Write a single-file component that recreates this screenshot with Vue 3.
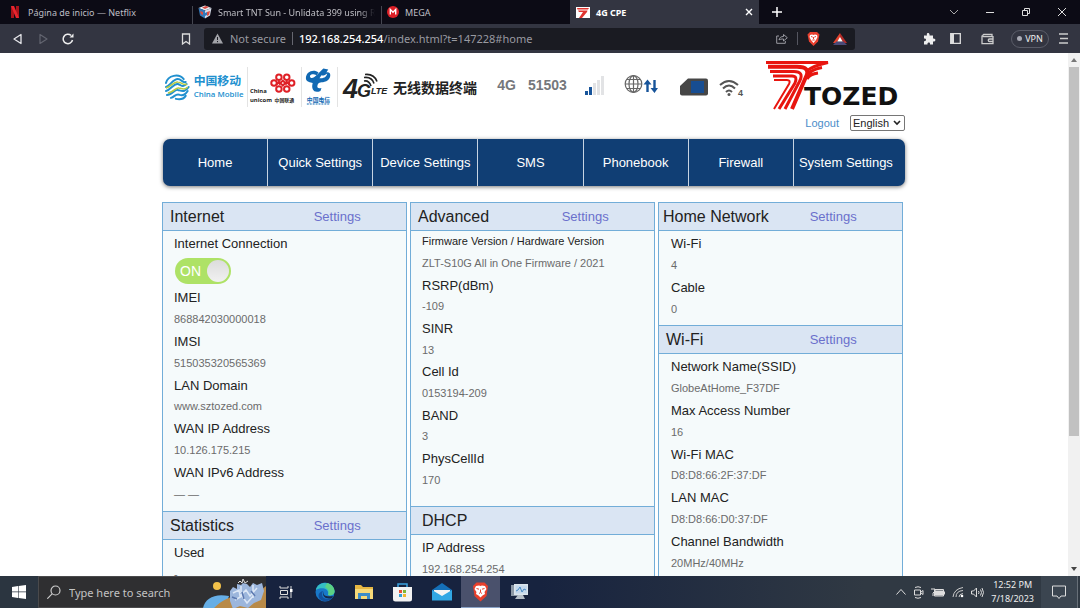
<script setup>
import { ref } from 'vue'

const address = ref('192.168.254.254/index.html?t=147228#home')
const language = ref('English')
const connected = ref(true)
const search = ref('')

const menu = ['Home', 'Quick Settings', 'Device Settings', 'SMS', 'Phonebook', 'Firewall', 'System Settings']

const columns = [
  [
    {
      title: 'Internet', settings: true, toggle: true, kind: 'internet',
      rows: [
        ['IMEI', '868842030000018'],
        ['IMSI', '515035320565369'],
        ['LAN Domain', 'www.sztozed.com'],
        ['WAN IP Address', '10.126.175.215'],
        ['WAN IPv6 Address', '— —']
      ]
    },
    { title: 'Statistics', settings: true, kind: 'statistics', rows: [['Used', '-']] }
  ],
  [
    {
      title: 'Advanced', settings: true, kind: 'advanced',
      rows: [
        ['Firmware Version / Hardware Version', 'ZLT-S10G All in One Firmware / 2021'],
        ['RSRP(dBm)', '-109'],
        ['SINR', '13'],
        ['Cell Id', '0153194-209'],
        ['BAND', '3'],
        ['PhysCellId', '170']
      ]
    },
    { title: 'DHCP', kind: 'dhcp', rows: [['IP Address', '192.168.254.254']] }
  ],
  [
    { title: 'Home Network', settings: true, kind: 'network', rows: [['Wi-Fi', '4'], ['Cable', '0']] },
    {
      title: 'Wi-Fi', settings: true, kind: 'wifi',
      rows: [
        ['Network Name(SSID)', 'GlobeAtHome_F37DF'],
        ['Max Access Number', '16'],
        ['Wi-Fi MAC', 'D8:D8:66:2F:37:DF'],
        ['LAN MAC', 'D8:D8:66:D0:37:DF'],
        ['Channel Bandwidth', '20MHz/40MHz']
      ]
    }
  ]
]
</script>

<template>
  <div class="screen">
    <header class="tabs">
      <button class="tab">
        <svg width="14" height="14" viewBox="0 0 14 14"><path d="M3 1h3v12H3z" fill="#a9141b" /><path d="M8 1h3v12H8z" fill="#a9141b" /><path d="M3 1h3l5 12H8z" fill="#e8252e" /></svg>
        <span>Página de inicio — Netflix</span>
      </button>
      <button class="tab second">
        <svg width="14" height="14" viewBox="0 0 14 14"><path d="M0.500 3 7 .5 13.500 3 7 5.500z" fill="#e9eef4" /><path d="M.5 3 7 5.500v8L2 10.500z" fill="#3479b9" /><path d="M13.500 3 7 5.500v8l5-3z" fill="#d7dce8" /><path d="M4 2.500 8 1l3 1-4 2z" fill="#d84a42" /><path d="m2 6 3 1v3L3 9zM9 7l3-1-1 4-2 1z" fill="#e04c3f" /><path d="m7 8 2-1v3l-2 1z" fill="#3479b9" /></svg>
        <span>Smart TNT Sun - Unlidata 399 using R</span>
      </button>
      <button class="tab third">
        <svg width="12" height="12" viewBox="0 0 12 12"><circle cx="6" cy="6" r="6" fill="#dd1f26" /><path d="M3.300 8.500V3.500L6 6.200l2.700-2.700v5" fill="none" stroke="#fff" stroke-width="1.400" /></svg>
        <span>MEGA</span>
      </button>
      <div class="tab active">
        <svg width="14" height="11" viewBox="0 0 14 11"><path d="M0 0h14v11H0z" fill="#fff" /><path d="M1 1h12l-1 1.500H1.500zM2 3.500h9.500L11 5H3zM7 5h4L6 11H3z" fill="#e0342f" /></svg>
        <span>4G CPE</span>
        <button class="close" aria-label="Close tab"><svg width="8" height="8" viewBox="0 0 8 8"><path d="m1 1 6 6M7 1 1 7" stroke="#fff" stroke-width="1.400" /></svg></button>
      </div>
      <button class="plain new" aria-label="New tab"><svg width="10" height="10" viewBox="0 0 10 10"><path d="M5 0v10M0 5h10" stroke="#fff" stroke-width="1.500" /></svg></button>
      <div class="window">
        <button class="plain" aria-label="Tab list"><svg width="10" height="10" viewBox="0 0 10 10"><path d="m1 3 4 4 4-4" fill="none" stroke="#aaa" /></svg></button>
        <button class="plain" aria-label="Minimize"><svg width="10" height="10" viewBox="0 0 10 10"><path d="M1 5.500h8" stroke="#ddd" /></svg></button>
        <button class="plain" aria-label="Restore"><svg width="10" height="10" viewBox="0 0 10 10"><path d="M1.500 3.500h5v5h-5zM3.500 3V1.500h5v5H7" fill="none" stroke="#ddd" /></svg></button>
        <button class="plain" aria-label="Close"><svg width="10" height="10" viewBox="0 0 10 10"><path d="m1 1 8 8M9 1 1 9" stroke="#ddd" /></svg></button>
      </div>
    </header>

    <div class="toolbar">
      <div class="history">
        <button class="plain" aria-label="Back"><svg width="12" height="12" viewBox="0 0 12 12"><path d="M9 1.500v9L2 6z" fill="none" stroke="#e6e6ea" stroke-width="1.300" stroke-linejoin="round" /></svg></button>
        <button class="plain" aria-label="Forward"><svg width="12" height="12" viewBox="0 0 12 12"><path d="M3 1.500v9L10 6z" fill="none" stroke="#62646f" stroke-width="1.200" stroke-linejoin="round" /></svg></button>
        <button class="plain" aria-label="Reload"><svg width="12" height="12" viewBox="0 0 12 12"><path d="M10.500 7A4.700 4.700 0 1 1 9 2.400" fill="none" stroke="#eee" stroke-width="1.500" /><path d="M7.500 4.500h4v-4z" fill="#eee" /></svg></button>
      </div>
      <button class="plain" aria-label="Bookmark"><svg width="10" height="12" viewBox="0 0 10 12"><path d="M1.500 1h7v10L5 8.500 1.500 11z" fill="none" stroke="#ddd" stroke-width="1.300" /></svg></button>
      <div class="address">
        <svg width="11" height="11" viewBox="0 0 11 11"><path d="M5.500.5 11 10.500H0z" fill="#a2a3a8" /><path d="M5.500 4v3M5.500 8v1.200" stroke="#1b1c24" /></svg>
        <span class="secure">Not secure</span>
        <label class="url"><span aria-hidden="true"><b>192.168.254.254</b>/index.html?t=147228#home</span><input v-model="address" aria-label="Address"></label>
        <svg width="12" height="11" viewBox="0 0 12 11"><path d="M3 3H.7v7.300h8.600V8" fill="none" stroke="#9a9ba2" /><path d="M3 7c.5-2.500 2-3.500 4.500-3.500v-2L11.300 4.700 7.500 8V6C5.500 6 4 6 3 7z" fill="none" stroke="#9a9ba2" /></svg>
        <i class="bar"></i>
        <svg width="13" height="14" viewBox="0 0 13 14"><path d="m3 0h7l2.500 2.500-1.500 7L6.500 14 2 9.500.5 2.500z" fill="#e8402f" /><path d="m3 3 2-.5 1.500.5L8 2.500l2 .5.500 2L9 8l-2.500 3L4 8 2.500 5z" fill="#fff" /><path d="m4 4.500 1.700.6M9 4.500l-1.700.6M6.500 5v2M5.300 8h2.400" stroke="#e8402f" /></svg>
        <svg class="bat" width="14" height="12" viewBox="0 0 14 12"><path d="M7 0v5L3.500 10H0z" fill="#e2432e" /><path d="M7 0v5l3.500 5H14z" fill="#b32c28" /><path d="M0 12h14l-3.500-3.500h-7z" fill="#4b4a78" /><path d="m7 4 2.700 4.500H4.300z" fill="#fff" /></svg>
      </div>
      <div class="extras">
        <button class="plain" aria-label="Extensions"><svg width="13" height="13" viewBox="0 0 13 13"><path d="M1 3.500h3C2.900.3 7.100.3 6.500 3.500H10v3c3.200-.6 3.200 3.600 0 3v3H7c.6-2.700-3-2.700-2.500 0H1V9.200c2.700.5 2.700-3.300 0-2.700z" fill="#eee" /></svg></button>
        <button class="plain" aria-label="Sidebar"><svg width="11" height="11" viewBox="0 0 11 11"><path d="M.7.7h9.600v9.600H.7z" fill="none" stroke="#ddd" stroke-width="1.300" /><path d="M1 1h3v9H1z" fill="#ddd" /></svg></button>
        <button class="plain" aria-label="Wallet"><svg width="13" height="12" viewBox="0 0 13 12"><path d="M11 3.500V1.500H2.500a1.200 1.200 0 0 0 0 2.200H12v7H1V2.500M12 6H8.500a1.200 1.200 0 0 0 0 2.500H12" fill="none" stroke="#ccc" stroke-width="1.300" /></svg></button>
        <button class="vpn"><i></i>VPN</button>
        <button class="plain" aria-label="Menu"><svg width="9" height="11" viewBox="0 0 9 11"><path d="M0 1h9M1 5.500h8M0 10h9" stroke="#ccc" stroke-width="1.300" /></svg></button>
      </div>
    </div>

    <div class="viewport">
      <main class="page">
        <header class="masthead">
          <div class="carriers">
            <svg class="ruled" width="86" height="40" viewBox="0 0 86 40" role="img" aria-label="China Mobile">
              <g fill="none" stroke="#2190cf" stroke-width="2" stroke-linecap="round"><path d="M4 16c2-8 13-10 18-4M4 20c4-1 7-8 12-8 4 0 4 4 8 3" /><path d="M4 24c5-1 8-8 12-7 4 1 4 4 9 0" /><path d="M5 28c5 0 8-6 11-5 4 1 7 3 11-3" /><path d="M9 31c4-1 5-5 9-3 3 1 6-1 8-4M14 32c4 1 8 0 10-3" /></g>
              <path d="M4 21c5-1 8-7 12-6 4 0 5 4 9 2M6 26c5 0 8-6 11-5 4 1 6 2 9-1" fill="none" stroke="#b8cc43" stroke-width="1.500" />
              <text class="cjk" x="32" y="18" font-size="12" font-weight="700" fill="#2190cf">中国移动</text>
              <text class="latin" x="32" y="30" font-size="8" font-weight="600" fill="#2190cf">China Mobile</text>
            </svg>
            <svg class="ruled" width="54" height="40" viewBox="0 0 54 40" role="img" aria-label="China Unicom">
              <g fill="none" stroke="#df2026" stroke-width="2"><circle cx="26.500" cy="16" r="2.800" /><circle cx="44.500" cy="16" r="2.800" /><circle cx="31.500" cy="10" r="2.800" /><circle cx="39.500" cy="10" r="2.800" /><circle cx="31.500" cy="22" r="2.800" /><circle cx="39.500" cy="22" r="2.800" /><path d="m29 17.500 2.500-3 4 4 4-4 2.500 3M31.500 17.500l4-4 4 4" /></g>
              <text class="latin" x="2" y="26" font-size="6" font-weight="700" fill="#222">China</text>
              <text class="latin" x="2" y="35" font-size="6" font-weight="700" fill="#222">unicom</text>
              <text class="cjk" x="27" y="35" font-size="5" font-weight="700" fill="#222">中国联通</text>
            </svg>
            <svg class="ruled" width="36" height="40" viewBox="0 0 36 40" role="img" aria-label="China Telecom">
              <path d="M4 11C4 4 12 1 17 5l-2 3C9 5 7 9 9 10.500c3 2 9-6 13-9.500l5 1-2 3c6-1 5 7 0 9-5 2-8 0-9 4-1 3 1 4 4 3l-1 3c-6 3-10-1-8-8C9 15 4 15 4 11z" fill="#1169b3" />
              <path d="M20 8c2 1 4-1 6-2-1 4-4 5-8 5" fill="#fff" />
              <text class="cjk" x="5" y="35" font-size="6" font-weight="700" fill="#1169b3">中国电信</text>
              <path d="M5 37.500h24" stroke="#1169b3" stroke-dasharray="2 1" />
            </svg>
            <svg width="55" height="40" viewBox="0 0 55 40" role="img" aria-label="4G LTE">
              <g font-style="italic" font-weight="700" fill="#222"><text x="5" y="31" font-size="27">4</text><text x="19" y="30" font-size="18">G</text><text x="33" y="27" font-size="9">LTE</text></g>
              <path d="M26 14q5-1 7 5M26 10.500q8-1 10 6M27 7.500q9-1 12 7" fill="none" stroke="#222" stroke-width="1.600" />
            </svg>
            <strong class="terminal">无线数据终端</strong>
          </div>
          <div class="status">
            <b>4G</b>
            <b>51503</b>
            <svg class="signal" width="20" height="19" viewBox="0 0 20 19"><path d="M0 15h3v4H0zM4 11h3v8H4z" fill="#17549a" /><path d="M8 7h3v12H8zM12 4h3v15h-3zM16 0h3v19h-3z" fill="#e2e3e5" /></svg>
            <svg class="globe" width="34" height="20" viewBox="0 0 34 20"><g fill="none" stroke="#666" stroke-width="1.200"><circle cx="9.500" cy="9" r="8.300" /><ellipse cx="9.500" cy="9" rx="4.500" ry="8.300" /><path d="M9.500 1v16M1 9h17M2.500 4.500h14M2.500 13.500h14" /></g><path d="M23.500 17V7M30.500 5v10" stroke="#17549a" stroke-width="2.400" /><path d="m19.500 9.500 4-5 4 5zM26.500 13l4 5 3.500-5z" fill="#17549a" /></svg>
            <svg class="sim" width="28" height="18" viewBox="0 0 28 18"><path d="M8 .5h18a2 2 0 0 1 2 2v13a2 2 0 0 1-2 2H2a2 2 0 0 1-2-2V8z" fill="#464646" /><path d="M11 3h13v12H11z" fill="#174d91" /></svg>
            <svg class="wireless" width="26" height="20" viewBox="0 0 26 20"><g fill="none" stroke="#555" stroke-width="2"><path d="M1 7q9-8 18 0" /><path d="M4 10.500q6-6 12 0" /><path d="M7 14q3-3 6 0" /></g><circle cx="10" cy="16.500" r="1.500" fill="#555" /><text x="19" y="18" font-size="9" font-weight="700" fill="#555">4</text></svg>
          </div>
          <div class="brand">
            <svg width="140" height="54" viewBox="0 0 140 54" role="img" aria-label="Tozed">
              <g fill="none" stroke="#e8150f" stroke-width="3"><path d="M1 3.500h62q-15 3-22 9" /><path d="M3 7.800h29q14 0 9 10L27 50" stroke-width="4" /><path d="M5 12.500h24q10 0 6 9L20 50" /><path d="M8 17h19q6 0 3 7L14 50" /><path d="M9 21h13q4 0 2 4L9 50" stroke-width="2" /><path d="M57 8.500q-12 2-15 9M53 14q-8 1-11 6" /></g>
              <text class="tozed" x="39" y="46" font-size="25" font-weight="700" fill="#111">TOZED</text>
            </svg>
            <div class="account">
              <a href="#logout">Logout</a>
              <span class="language">
                <select v-model="language" aria-label="Language"><option>English</option></select>
                <svg width="8" height="6" viewBox="0 0 8 6"><path d="m1 1 3 3 3-3" fill="none" stroke="#222" stroke-width="1.600" /></svg>
              </span>
            </div>
          </div>
        </header>

        <nav class="menu">
          <a v-for="item in menu" :key="item" href="#home">{{ item }}</a>
        </nav>

        <div class="panels">
          <div v-for="(column, i) in columns" :key="i" class="column">
            <section v-for="panel in column" :key="panel.title" :class="panel.kind">
              <header class="head">
                <h2>{{ panel.title }}</h2>
                <a v-if="panel.settings" href="#settings">Settings</a>
              </header>
              <div class="body">
                <div v-if="panel.toggle" class="connection">
                  <span id="connection">Internet Connection</span>
                  <button class="switch" role="switch" :aria-checked="connected" aria-labelledby="connection" @click="connected = !connected">{{ connected ? 'ON' : 'OFF' }}<i></i></button>
                </div>
                <dl>
                  <template v-for="row in panel.rows" :key="row[0]">
                    <dt>{{ row[0] }}</dt>
                    <dd>{{ row[1] }}</dd>
                  </template>
                </dl>
              </div>
            </section>
          </div>
        </div>
      </main>
      <div class="scrollbar" aria-hidden="true">
        <svg width="6" height="4" viewBox="0 0 6 4"><path d="m0 4 3-4 3 4z" fill="#777" /></svg>
        <i></i>
        <svg width="6" height="4" viewBox="0 0 6 4"><path d="m0 0 3 4 3-4z" fill="#444" /></svg>
      </div>
    </div>

    <footer class="taskbar">
      <button class="start" aria-label="Start"><svg width="14" height="14" viewBox="0 0 14 14"><path d="m0 2 6-1v5.600H0zM6.600 1 14 0v6.600H6.600zM0 7.300h6V13l-6-1zM6.600 7.300H14V14l-7.400-1z" fill="#fff" /></svg></button>
      <label class="search">
        <svg width="14" height="14" viewBox="0 0 14 14"><circle cx="8.500" cy="5.500" r="4.500" fill="none" stroke="#ccc" stroke-width="1.200" /><path d="m5.300 8.700-5 5" stroke="#ccc" stroke-width="1.200" /></svg>
        <input v-model="search" placeholder="Type here to search" aria-label="Type here to search">
        <svg class="scene" width="64" height="32" viewBox="0 0 64 32"><circle cx="15" cy="10" r="4" fill="#f3c24a" /><path d="M1 32c2-10 12-15 26-12l-4 12z" fill="#66aee5" /><path d="M12 32c8-8 16-12 28-13 12 0 18-4 24-9v22z" fill="#b88a48" /><path d="M28 15l3-4 4 2V8l4 1 2-2 4 1 3 3 3-4 4 2 5-2 2 8-3 9-7 3-6 5-8-2-7 3-3-8z" fill="#9cb6dc" /><path d="m31 17 6-3 1 6 6-6 4 6 7-8M33 24l7-4 5 7 7-8M39 10v7M51 9v13" fill="none" stroke="#dce7f6" stroke-width="1.500" /><path d="m30 21 5 2m5-7 2 7m7-8 4 5" stroke="#5c79b0" stroke-width="1.500" /><path d="m36 7 2-2 2 2 1-4 2 4 3-2" fill="none" stroke="#ddd" /></svg>
      </label>
      <div class="apps">
        <button aria-label="Task view"><svg width="14" height="14" viewBox="0 0 14 14"><path d="M1 1v2h8V1M1.500 5.500h7v4h-7zM1 14v-2h8v2M12 1v12" fill="none" stroke="#ddd" /><path d="M11 4h2.500v3H11z" fill="#fff" /></svg></button>
        <button aria-label="Edge"><svg width="20" height="20" viewBox="0 0 20 20"><circle cx="10" cy="10" r="9.500" fill="#1878c9" /><path d="M.8 8C3-2 18-1 19.500 9c.4 4-3.500 5-6.500 4 2-6-6-9-12.200-5z" fill="#35bec3" /><path d="M12 1c5 1 8 5 7.500 9-.5 3-4 4-6.500 3 1.500-4 0-6-3-8z" fill="#5bd184" /><path d="M8 9c-3 5 1 10 9 7-3 4-8 4-11 2-4-3-3-8 2-9z" fill="#12509d" /><path d="M9 9c-2 5 3 6 9 5l-1 2c-6 2-11-2-8-7z" fill="#18284b" /></svg></button>
        <button aria-label="File Explorer"><svg width="18" height="16" viewBox="0 0 18 16"><path d="M0 1h6l2 2h10v12H0z" fill="#e7b743" /><path d="M0 5h18v10H0z" fill="#f7d978" /><path d="M3 15V9h12v6h-3v-3H6v3z" fill="#3c8cc8" /></svg></button>
        <button aria-label="Store"><svg width="19" height="19" viewBox="0 0 19 19"><path d="M5 5V1h9v4" fill="none" stroke="#3ba2df" stroke-width="1.500" /><path d="M0 4h19v12q0 2.500-2.500 2.500h-14Q0 18.500 0 16z" fill="#f2f2f2" /><path d="M6 7h3v3H6z" fill="#e65136" /><path d="M10 7h3v3h-3z" fill="#7eb839" /><path d="M6 11h3v3H6z" fill="#319fd5" /><path d="M10 11h3v3h-3z" fill="#f0b52e" /></svg></button>
        <button aria-label="Mail"><svg width="20" height="18" viewBox="0 0 20 18"><path d="m0 7 10-7 10 7v2H0z" fill="#1570b8" /><path d="M2 7h16v4l-8 4-8-4z" fill="#f4f4f4" /><path d="m0 7 10 6 10-6v10.500H0z" fill="#31a7e4" /></svg></button>
        <button class="running" aria-label="Brave"><svg width="17" height="20" viewBox="0 0 17 20"><path d="m4.500.5h8L16 4l-1.500 10-6 5.500-6-5.500L1 4z" fill="#e8402c" /><path d="m4 4 3-.5 1.500.5 1.500-.5 3 .5 1.500 3-2 3 .5 2-2.500 1.500-2 2-2-2L4 12l.5-2-2-3z" fill="#fff" /><path d="m4.500 6.500 2.500.7m5.500-.7L10 7.200M8.500 7.500v2.500M7 11.500l1.500-1 1.500 1" fill="none" stroke="#e8402c" /></svg></button>
        <button aria-label="System monitor"><svg width="19" height="18" viewBox="0 0 19 18"><path d="M1 2h9v11H1z" fill="#8c98a5" /><path d="M4 1h14v11H4z" fill="#dce5ec" /><path d="M5.500 2.500H17v8H5.500z" fill="#c4d8ec" /><path d="m6 8 2-1 2-3 2 5 2-3 2 1" fill="none" stroke="#4788c1" /><path d="M8 12h5l2 4H5z" fill="#b6bfc8" /></svg></button>
      </div>
      <div class="tray">
        <svg width="10" height="6" viewBox="0 0 10 6"><path d="m.5 5.500 4.500-5 4.500 5" fill="none" stroke="#ddd" /></svg>
        <svg width="11" height="13" viewBox="0 0 11 13"><path d="M2 1.500Q5 0 8 1.500M2 11.500q3 1.500 6 0M1.500 4h6v5h-6zM8 6l2-1.500v4L8 7" fill="none" stroke="#ddd" /></svg>
        <svg width="14" height="9" viewBox="0 0 14 9"><path d="M4 2.500h8v5H4z" fill="#ddd" /><path d="M3.500 1.500h9v6.500h-9zM13.500 3.500v3" fill="none" stroke="#ddd" /><path d="M0 1h4v2L2 5v3" fill="none" stroke="#ddd" /></svg>
        <svg width="12" height="12" viewBox="0 0 12 12"><path d="M1 11Q2 3 11 1.500M4 11q0-6 7-6.500M7 11q0-3 4-3.500" fill="none" stroke="#ccc" /><circle cx="10" cy="10" r="1.300" fill="#fff" /></svg>
        <svg width="13" height="11" viewBox="0 0 13 11"><path d="M.5 4h2l3-3v9l-3-3h-2zM7.500 4q1 1.500 0 3M9.500 2.500q2 3 0 6M11 1q3 4.500 0 9" fill="none" stroke="#ddd" /></svg>
        <time datetime="2023-07-18T12:52">12:52 PM<br>7/18/2023</time>
        <button class="plain notices" aria-label="Notifications"><svg width="14" height="14" viewBox="0 0 14 14"><path d="M.5 1h13v10H9l-2 2.500L5 11H.5z" fill="none" stroke="#ddd" /></svg></button>
      </div>
    </footer>
  </div>
</template>

<style>
html,
body {
  height: 100%;
  overflow: hidden;
}
</style>

<style scoped>
* {
  box-sizing: border-box;
}
.screen {
  display: flex;
  flex-direction: column;
  height: 100vh;
  overflow: hidden;
  background: #fff;
  color: #222;
  font-family: "Liberation Sans", Arial, "Noto Sans CJK SC", sans-serif;
  font-size: 13px;
}
button,
input,
select {
  font: inherit;
  color: inherit;
  margin: 0;
}
button {
  padding: 0;
  border: 0;
  background: none;
}
svg {
  flex: none;
}
a {
  text-decoration: none;
}
.cjk {
  font-family: "Noto Sans CJK SC", sans-serif;
}
.latin {
  font-family: "Open Sans", "Noto Sans", sans-serif;
}
.plain {
  display: flex;
  align-items: center;
  justify-content: center;
}

/* browser chrome */
.tabs,
.toolbar,
.taskbar {
  flex: none;
  display: flex;
  font-family: "Noto Sans", "Open Sans", sans-serif;
}
.tabs {
  height: 24px;
  background: #0c0b15;
  color: #bfbfc5;
  font-size: 9px;
}
.tab {
  flex: 0 1 189px;
  min-width: 0;
  display: flex;
  align-items: center;
  gap: 6px;
  padding: 0 6px;
  white-space: nowrap;
  overflow: hidden;
}
.tab:first-child {
  padding-left: 8px;
  flex-basis: 192px;
}
.tab.second span {
  overflow: hidden;
  mask-image: linear-gradient(90deg, #000 90%, transparent);
}
.tab.second,
.tab.third {
  background: linear-gradient(#454650, #454650) left bottom / 1px 18px no-repeat;
}
.tab.active {
  background: #333541;
  color: #fff;
  font-weight: 700;
}
.close {
  display: flex;
  margin-left: auto;
}
.new {
  width: 36px;
}
.window {
  display: flex;
  margin-left: auto;
}
.window .plain {
  width: 36px;
}
.toolbar {
  height: 29px;
  align-items: center;
  padding: 0 12px;
  background: #333541;
}
.history {
  display: flex;
  gap: 13px;
  margin-right: 107px;
}
.address {
  flex: 1;
  height: 22px;
  display: flex;
  align-items: center;
  margin-left: 13px;
  padding: 0 8px;
  border-radius: 3px;
  background: #1a1b22;
  color: #999aa1;
  font-size: 11px;
}
.secure {
  margin-left: 7px;
  padding-right: 6px;
  margin-right: 6px;
  border-right: 1px solid #666770;
  line-height: 13px;
}
.url {
  flex: 1;
  position: relative;
  white-space: nowrap;
}
.url b {
  color: #fff;
  font-weight: 500;
}
.url input {
  position: absolute;
  inset: 0;
  width: 100%;
  padding: 0;
  border: 0;
  background: none;
  opacity: 0;
}
.bar {
  width: 1px;
  height: 13px;
  margin: 0 9px;
  background: #555660;
}
.bat {
  margin-left: 13px;
}
.extras {
  display: flex;
  align-items: center;
  margin-left: 68px;
}
.extras .plain:nth-child(2) {
  margin-left: 14px;
}
.extras .plain:nth-child(3) {
  margin-left: 20px;
}
.vpn {
  width: 38px;
  height: 18px;
  display: flex;
  align-items: center;
  justify-content: center;
  gap: 3px;
  margin: 0 10px 0 17px;
  border: 1px solid #5a5c68;
  border-radius: 9px;
  color: #eee;
  font-size: 9px;
}
.vpn i {
  width: 5px;
  height: 5px;
  border-radius: 50%;
  background: #aaabb5;
}

/* router page */
.viewport {
  flex: 1;
  min-height: 0;
  display: flex;
}
.page {
  flex: 0 1 744px;
  min-width: 0;
  margin: 0 auto;
  display: flex;
  flex-direction: column;
}
.masthead {
  flex: none;
  display: flex;
  justify-content: space-between;
  margin-bottom: 8px;
}
.carriers,
.status {
  display: flex;
  align-items: center;
  height: 40px;
  margin-top: 14px;
}
.ruled {
  border-right: 1px solid #e3e3e3;
}
.terminal {
  font-family: "Noto Sans CJK SC", sans-serif;
  font-size: 14px;
}
.status {
  height: 36px;
  color: #75777b;
  font-size: 14px;
}
.status b + b {
  margin-left: 12px;
}
.signal {
  margin-left: 18px;
}
.globe {
  margin-left: 19px;
}
.sim {
  margin: 4px 0 0 22px;
}
.wireless {
  margin: 5px 0 0 11px;
}
.brand {
  margin-right: 1px;
  padding-top: 6px;
}
.brand > svg {
  display: block;
}
.tozed {
  font-family: "DejaVu Sans", sans-serif;
}
.account {
  display: flex;
  justify-content: flex-end;
  align-items: center;
  gap: 11px;
  margin-top: 2px;
  font-size: 11px;
}
.account a {
  color: #4b8dc9;
}
.language {
  position: relative;
  display: flex;
}
.language select {
  width: 55px;
  height: 16px;
  padding: 0 2px;
  border: 1px solid #767676;
  border-radius: 2px;
  background: #fff;
  appearance: none;
}
.language svg {
  position: absolute;
  top: 5px;
  right: 4px;
  pointer-events: none;
}
.menu {
  flex: none;
  display: flex;
  height: 47px;
  margin: 0 1px 16px;
  padding-right: 7px;
  border-radius: 7px;
  background: #103e74;
  box-shadow: 0 1px 4px #777;
}
.menu a {
  flex: 1;
  display: flex;
  align-items: center;
  justify-content: center;
  border-left: 1px solid #c6d3e2;
  color: #fff;
  white-space: nowrap;
}
.menu a:first-child {
  border-left: 0;
}
.panels {
  flex: 1;
  display: grid;
  grid-template-columns: repeat(3, minmax(0, 1fr));
  gap: 3px;
  padding-right: 3px;
}
.column {
  border: solid #72add8;
  border-width: 0 1px;
  background: #f5fafb;
}
.head {
  height: 29px;
  display: grid;
  grid-template-columns: 62% 1fr;
  align-items: center;
  border: solid #72add8;
  border-width: 1px 0;
  background: #dae5f3;
}
.head h2 {
  margin: 0;
  padding-left: 7px;
  font-size: 16px;
  font-weight: 400;
  white-space: nowrap;
}
.network .head h2 {
  padding-left: 4px;
}
.dhcp .head h2 {
  padding-left: 11px;
}
.head a {
  color: #6a70cc;
}
.body {
  padding: 2px 11px 6px;
}
.connection span {
  display: block;
  line-height: 22px;
}
.switch {
  position: relative;
  display: block;
  width: 56px;
  height: 26px;
  margin: 3px 1px;
  padding-left: 5px;
  border-radius: 13px;
  background: #aee266;
  color: #fff;
  font-size: 14px;
  text-align: left;
}
.switch i {
  position: absolute;
  top: 2px;
  right: 2px;
  width: 22px;
  height: 22px;
  border-radius: 50%;
  background: linear-gradient(#dcdcdc, #f1f1f1);
}
.switch[aria-checked="false"] {
  padding-left: 26px;
  background: #aaa;
}
.switch[aria-checked="false"] i {
  right: 32px;
}
dl {
  display: grid;
  grid-auto-rows: 1fr;
  align-items: center;
  margin: 0;
  line-height: 21px;
}
dd {
  margin: 0;
  color: #6b6b6b;
  font-size: 11px;
}
.internet dl,
.wifi dl {
  min-height: 218px;
}
.advanced dl {
  min-height: 260px;
}
.advanced dt:first-child {
  font-size: 11px;
}
.advanced .body {
  padding-top: 0;
  padding-bottom: 15px;
}
.network .body,
.wifi .body {
  padding-left: 12px;
}
.network dl {
  min-height: 87px;
}
.network .body {
  padding-bottom: 5px;
}
.statistics .body,
.dhcp .body {
  padding-top: 1px;
}
.statistics dl,
.dhcp dl {
  min-height: 44px;
}
.scrollbar {
  flex: none;
  width: 12px;
  display: flex;
  flex-direction: column;
  align-items: center;
  padding: 5px 0;
  background: #f1f1f1;
}
.scrollbar i {
  width: 10px;
  height: 72%;
  margin: 5px 0 auto;
  background: #c1c1c1;
}

/* taskbar */
.taskbar {
  height: 32px;
  background: linear-gradient(90deg, #17233f 50%, #303943 80%);
}
.start {
  width: 38px;
  display: flex;
  align-items: center;
  justify-content: center;
  background: #2b3540;
}
.search {
  width: 228px;
  display: flex;
  align-items: center;
  gap: 8px;
  padding-left: 8px;
  border: 1px solid #4a4a4c;
  border-right: 0;
  background: #2f2f31;
}
.search input {
  flex: 1;
  min-width: 0;
  padding: 0;
  border: 0;
  outline: 0;
  background: none;
  color: #ddd;
  font-size: 11px;
}
.search input::placeholder {
  color: #c3c3c3;
  opacity: 1;
}
.apps {
  display: flex;
}
.apps button {
  width: 39px;
  display: flex;
  align-items: center;
  justify-content: center;
}
.apps .running {
  border-bottom: 1px solid #8ba4c8;
  background: #4a516c;
}
.tray {
  display: flex;
  align-items: center;
  gap: 7px;
  margin-left: auto;
  padding-right: 2px;
}
.tray time {
  color: #eee;
  font-size: 9px;
  line-height: 14px;
  text-align: center;
}
.notices {
  width: 37px;
  height: 32px;
  border-right: 1px solid #687079;
  background: #3b4550;
}
</style>
